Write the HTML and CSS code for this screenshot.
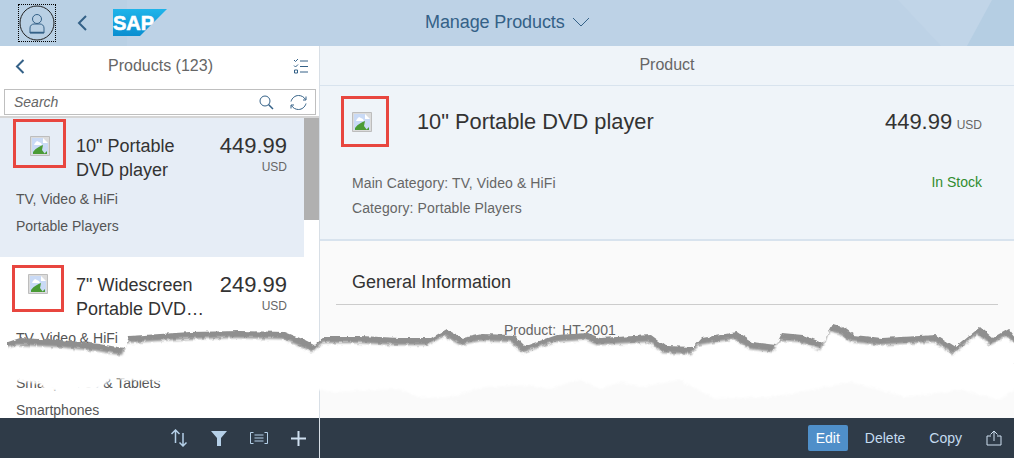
FILE: index.html
```html
<!DOCTYPE HTML>
<html>

<head>
  <title>Manage Products</title>
  <meta charset="utf-8" />
  <link rel="stylesheet" href="styles.css">
</head>

<body>
<svg class="defs" width="0" height="0">
  <defs>
    <linearGradient id="sapblue" x1="0" y1="0" x2="0" y2="1">
      <stop offset="0" stop-color="#1fb4ea" />
      <stop offset="1" stop-color="#0a8ed0" />
    </linearGradient>
    <symbol id="brokenimg" viewBox="0 0 20 20">
      <path d="M.5.500h19v19H.500z" fill="#dcdcdc" stroke="#bdbdbd" />
      <path d="M2 2h11l5 5v11H2z" fill="#c9daf6" />
      <path d="M13 2l5 5h-5z" fill="#fff" />
      <path d="M5 7l2-2 2 1 2 1 1 2H4z" fill="#fff" />
      <path d="M3 18v-2c3-4 7-6 10-7l-1 5 3 4z" fill="#4a9b35" />
      <path d="M14 18l3-3v3z" fill="#4a9b35" />
    </symbol>
  </defs>
</svg>

<div class="app">
  <header class="shell">
    <svg class="shell-bg" width="1014" height="46">
      <path d="M0 0h127v46H0z" fill="#b9d0e4" />
      <path d="M898 0h116v46h-73z" fill="#c1d5e8" />
      <path d="M992 0h22v46h-47z" fill="#b5cee3" />
    </svg>
    <div class="shell-left">
      <span class="avatar">
        <svg width="36" height="36" viewBox="0 0 36 36" fill="none" stroke="#346187">
          <circle cx="18" cy="18" r="17" stroke="#222" />
          <circle cx="18" cy="14" r="4.500" />
          <path d="M11 28v-5c0-2.500 2-4 4-4h6c2 0 4 1.500 4 4v5z" />
          <path d="M11 27.500h14" stroke-width="1.500" />
        </svg>
      </span>
      <svg class="back" width="12" height="16" viewBox="0 0 12 16" fill="none" stroke="#346187" stroke-width="2">
        <path d="M10 1L3 8l7 7" />
      </svg>
      <svg class="logo" width="54" height="27" viewBox="0 0 54 27">
        <path d="M0 0h54L27 27H0z" fill="url(#sapblue)" />
        <text x="0" y="21" class="logo-text">SAP</text>
      </svg>
    </div>
    <div class="shell-title">
      <span>Manage Products</span>
      <svg width="18" height="10" viewBox="0 0 18 10" fill="none" stroke="#346187">
        <path d="M1 1l8 8 8-8" />
      </svg>
    </div>
  </header>

  <div class="main">
    <section class="master">
      <div class="master-head">
        <svg width="10" height="15" viewBox="0 0 10 15" fill="none" stroke="#346187" stroke-width="2">
          <path d="M8.500 1L2 7.500 8.500 14" />
        </svg>
        <span class="master-title">Products (123)</span>
        <svg width="15" height="16" viewBox="0 0 15 16" fill="none" stroke="#346187">
          <path d="M1 2l1.500 1.500L5 1M1 7.500L2.500 9 5 6.500M7 3h8M7 8.500h8M7 14h8" />
          <path d="M1.500 12h3v3h-3z" />
        </svg>
      </div>
      <div class="search">
        <span class="search-text">Search</span>
        <svg width="15" height="15" viewBox="0 0 15 15" fill="none" stroke="#346187">
          <circle cx="6" cy="6" r="5" />
          <path d="M9.500 9.500l4.500 4.500" stroke-width="1.500" />
        </svg>
        <svg width="17" height="17" viewBox="0 0 17 17" fill="none" stroke="#346187">
          <path d="M1 7.500C2 4 5 1.500 8.500 1.500c3 0 5.500 1.500 7 4M13 6h3V2.500" />
          <path d="M16 9.500c-1 3.500-4 6-7.500 6-3 0-5.500-1.500-7-4M4 11H1v3.500" />
        </svg>
      </div>
      <div class="list">
        <div class="scrollbar"></div>
        <article class="item item-selected">
          <div class="item-top">
            <div class="thumb"><svg width="20" height="20"><use href="#brokenimg" /></svg></div>
            <div class="item-name">10" Portable DVD player</div>
            <div class="item-price">
              <div class="price">449.99</div>
              <div class="unit">USD</div>
            </div>
          </div>
          <div class="meta">TV, Video &amp; HiFi</div>
          <div class="meta">Portable Players</div>
        </article>
        <article class="item item-second">
          <div class="item-top">
            <div class="thumb"><svg width="20" height="20"><use href="#brokenimg" /></svg></div>
            <div class="item-name">7" Widescreen Portable DVD…</div>
            <div class="item-price">
              <div class="price">249.99</div>
              <div class="unit">USD</div>
            </div>
          </div>
          <div class="meta">TV, Video &amp; HiFi</div>
          <div class="meta meta-low">Smartphones &amp; Tablets</div>
          <div class="meta">Smartphones</div>
        </article>
      </div>
      <footer class="bar bar-master">
        <svg width="18" height="18" viewBox="0 0 18 18" fill="none" stroke="#b5d0e8" stroke-width="1.500">
          <path d="M5.500 14V1M1.500 5l4-4 4 4M13 4v13M9.500 13.500L13 17l3.500-3.500" />
        </svg>
        <svg width="16" height="15" viewBox="0 0 16 15">
          <path d="M0 0h16l-6 7v8H6V7z" fill="#b5d0e8" />
        </svg>
        <svg width="18" height="12" viewBox="0 0 18 12" fill="none" stroke="#b5d0e8">
          <path d="M3.500.5h-3v11h3M14.500.5h3v11h-3M4.500 3h9M4.500 6h9M4.500 9h9" />
        </svg>
        <svg width="15" height="15" viewBox="0 0 15 15" fill="none" stroke="#cfe0f0" stroke-width="2">
          <path d="M7.500 0v15M0 7.500h15" />
        </svg>
      </footer>
    </section>

    <section class="detail">
      <div class="detail-top">
        <div class="detail-head">Product</div>
        <div class="detail-row">
          <div class="thumb thumb-detail"><svg width="20" height="20"><use href="#brokenimg" /></svg></div>
          <div class="detail-name">10" Portable DVD player</div>
          <div class="detail-price"><span class="price">449.99</span> <span class="unit">USD</span></div>
        </div>
        <div class="detail-info">
          <div>
            <div class="info-line">Main Category: TV, Video &amp; HiFi</div>
            <div class="info-line">Category: Portable Players</div>
          </div>
          <div class="stock">In Stock</div>
        </div>
      </div>
      <div class="detail-body">
        <h2 class="section-title">General Information</h2>
        <div class="field"><span>Product:</span> <span>HT-2001</span></div>
      </div>
      <footer class="bar bar-detail">
        <button class="action action-on">Edit</button>
        <button class="action">Delete</button>
        <button class="action">Copy</button>
        <svg class="share" width="16" height="16" viewBox="0 0 16 16" fill="none" stroke="#cfe0f0">
          <path d="M5 6H1v9h14V6h-4M8 11V1M4.500 4.500L8 1l3.500 3.500" />
        </svg>
      </footer>
    </section>
  </div>

  <!-- torn paper edge lies over the page -->
  <svg class="tear" width="1014" height="100" viewBox="0 315 1014 100">
    <defs>
      <filter id="rough" x="0" y="0" width="100%" height="100%">
        <feTurbulence type="fractalNoise" baseFrequency="0.18" numOctaves="2" seed="4" />
        <feDisplacementMap in="SourceGraphic" scale="4" xChannelSelector="R" yChannelSelector="G" />
      </filter>
      <filter id="soft" x="-2%" y="-10%" width="104%" height="120%">
        <feGaussianBlur stdDeviation="0.8" />
      </filter>
    </defs>
    <g filter="url(#rough)">
      <path d="M8 342L20 338 40 339 60 340 80 342 100 344 117 347 125 348 129 336 160 334 190 332 240 331 285 332 305 340 315 345 325 336 360 336 400 338 431 338 447 329 463 338 482 334 514 335 525 346 557 335 588 333 600 338 651 335 666 346 694 347 702 338 737 332 752 342 776 345 782 333 803 335 823 343 833 324 843 327 854 335 882 338 937 335 956 347 980 327 993 338 1009 329 1016 338V365H8z" fill="#8f8f8f" />
      <path transform="translate(0 2)" d="M-2 375L5 347 17 343 37 344 57 345 77 347 97 349 114 352 122 353 126 341 157 339 187 337 237 336 282 337 302 345 312 350 322 341 357 341 397 343 428 343 444 334 460 343 479 339 511 340 522 351 554 340 585 338 597 343 648 340 663 351 691 352 699 343 734 337 749 347 773 350 779 338 800 340 820 348 830 329 840 332 851 340 879 343 934 340 953 352 977 332 990 343 1006 334 1016 343V385L1000 398 960 388 905 395 850 380 790 392 770 395 715 397 680 378 640 385 620 380 600 387 580 377 550 387 530 383 485 385 450 395 420 396 400 387 330 390 319 387 112 377 97 388 45 389 40 381 16 379 0 375z" fill="#fff" filter="url(#soft)" />
    </g>
  </svg>
</div>
</body>

</html>
```

FILE: styles.css
```css
* {
  margin: 0;
  padding: 0;
  box-sizing: border-box;
}

html,
body {
  height: 100%;
  overflow: hidden;
}

body {
  font-family: "Liberation Sans", Arial, sans-serif;
  color: #333;
}

.defs {
  position: absolute;
}

.app {
  position: relative;
  width: 1014px;
  height: 458px;
  display: flex;
  flex-direction: column;
}

/* shell bar */
.shell {
  position: relative;
  height: 46px;
  background-color: #bdd2e6;
  display: flex;
  align-items: center;
  flex-shrink: 0;
}

.shell-bg {
  position: absolute;
  top: 0;
  left: 0;
}

.shell-left {
  position: relative;
  display: flex;
  align-items: center;
  padding-left: 18px;
  width: 300px;
}

.avatar {
  display: block;
  width: 38px;
  height: 38px;
  padding: 1px;
  outline: 1px dotted #000;
  outline-offset: -1px;
}

.avatar svg {
  display: block;
}

.back {
  margin-left: 20px;
}

.logo {
  margin-left: 25px;
  margin-top: -1px;
}

.logo-text {
  font: bold 20px "Liberation Sans", Arial, sans-serif;
  fill: #fff;
  stroke: #fff;
  stroke-width: 0.6px;
}

.shell-title {
  position: relative;
  margin-left: 125px;
  padding-bottom: 2px;
  display: flex;
  align-items: center;
  gap: 7px;
  font-size: 18px;
  letter-spacing: -0.1px;
  color: #346187;
}

.main {
  flex: 1;
  display: flex;
  min-height: 0;
}

/* master list */
.master {
  width: 320px;
  border-right: 1px solid #d8dfe6;
  display: flex;
  flex-direction: column;
  background-color: #fff;
}

.master-head {
  height: 40px;
  display: flex;
  align-items: center;
  justify-content: space-between;
  padding: 0 11px 0 15px;
  flex-shrink: 0;
}

.master-title {
  font-size: 16px;
  color: #666;
  margin-left: 3px;
}

.search {
  height: 26px;
  margin: 3px 3px 0 4px;
  border: 1px solid #bfbfbf;
  display: flex;
  align-items: center;
  gap: 16px;
  padding: 0 8px 0 9px;
  flex-shrink: 0;
}

.search-text {
  flex: 1;
  font-size: 14px;
  font-style: italic;
  color: #666;
}

.list {
  position: relative;
  flex: 1;
  min-height: 0;
  margin-top: 1px;
  border-top: 2px solid #d5d5d5;
  overflow: hidden;
}

.scrollbar {
  position: absolute;
  top: 0;
  right: 0;
  width: 15px;
  height: 102px;
  background-color: #b0b0b0;
}

.item {
  width: 304px;
  height: 139px;
  padding: 1px 17px 0 13px;
  border-bottom: 1px solid #e6edf6;
}

.item-selected {
  background-color: #e6edf6;
}

.item-top {
  display: flex;
  height: 67px;
}

.thumb {
  width: 53px;
  height: 49px;
  padding-top: 4px;
  border: 3px solid #e8463f;
  display: flex;
  align-items: center;
  justify-content: center;
  flex-shrink: 0;
}

.item-name {
  width: 130px;
  margin-left: 10px;
  padding-top: 15px;
  font-size: 18px;
  line-height: 24px;
  color: #333;
}

.item-price {
  flex: 1;
  text-align: right;
  padding-top: 15px;
}

.price {
  font-size: 22px;
  line-height: 24px;
  color: #333;
}

.unit {
  font-size: 12px;
  color: #666;
}

.item-price .unit {
  margin-top: 2px;
}

.meta {
  font-size: 14px;
  line-height: 27px;
  color: #555;
  padding-left: 3px;
}

.item-second {
  height: auto;
  padding-top: 8px;
  padding-left: 12px;
}

.item-second .item-top {
  height: 60px;
}

.item-second .thumb {
  width: 52px;
  height: 47px;
  padding-top: 0;
  padding-bottom: 9px;
}

.item-second .item-name {
  margin-left: 12px;
  padding-top: 8px;
}

.item-second .item-price {
  padding-top: 8px;
}

.item-second .meta {
  padding-left: 4px;
}

.item-second .meta-low {
  margin-top: 18px;
}

/* footers */
.bar {
  height: 40px;
  flex-shrink: 0;
  background-color: #2f3b48;
  display: flex;
  align-items: center;
  justify-content: flex-end;
}

.bar-master {
  gap: 23px;
  padding-right: 13px;
}

.bar-detail {
  padding-right: 12px;
}

.action {
  height: 26px;
  padding: 0 8px;
  border: 0;
  border-radius: 2px;
  background: none;
  font: 14px "Liberation Sans", Arial, sans-serif;
  color: #c5dcf0;
  margin-left: 8px;
}

.action-on {
  background-color: #4f8fc9;
  color: #fff;
  margin-right: 1px;
}

.share {
  margin-left: 16px;
}

/* detail */
.detail {
  flex: 1;
  display: flex;
  flex-direction: column;
  min-width: 0;
  background-color: #fafafa;
}

.detail-top {
  height: 195px;
  background-color: #eff4f9;
  border-bottom: 2px solid #d8e3ee;
  flex-shrink: 0;
}

.detail-head {
  height: 40px;
  line-height: 38px;
  border-bottom: 1px solid #d8e3ee;
  text-align: center;
  font-size: 16px;
  color: #666;
}

.detail-row {
  display: flex;
  align-items: center;
  padding: 10px 32px 0 21px;
}

.thumb-detail {
  width: 48px;
  height: 51px;
  padding-top: 0;
  padding-right: 6px;
}

.detail-name {
  flex: 1;
  margin-left: 28px;
  font-size: 21.8px;
  color: #333;
}

.detail-info {
  display: flex;
  justify-content: space-between;
  padding: 24px 32px 0 32px;
}

.info-line {
  font-size: 14px;
  letter-spacing: 0.1px;
  line-height: 25px;
  color: #666;
}

.stock {
  font-size: 14px;
  line-height: 23px;
  color: #2f8c2f;
}

.detail-body {
  flex: 1;
  min-height: 0;
  overflow: hidden;
  padding: 0 16px;
}

.section-title {
  height: 64px;
  padding: 30px 0 0 16px;
  border-bottom: 1px solid #ccc;
  font-size: 18px;
  line-height: 22px;
  font-weight: normal;
  color: #333;
}

.field {
  padding: 17px 0 0 168px;
  font-size: 14px;
  color: #666;
  word-spacing: 2px;
}

.tear {
  position: absolute;
  top: 315px;
  left: 0;
  pointer-events: none;
}
```
